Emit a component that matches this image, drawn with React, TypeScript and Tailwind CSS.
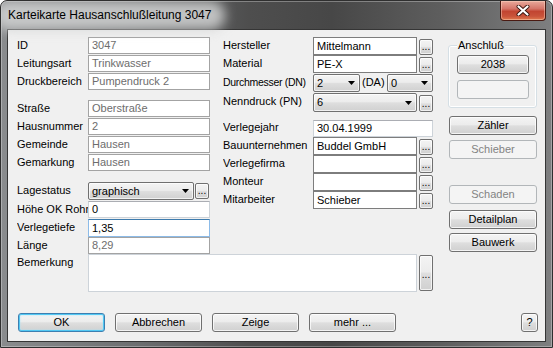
import React from "react";
import clsx from "clsx";

const BTN_BG =
  "bg-[linear-gradient(to_bottom,#f4f4f4_0%,#ececec_46%,#dedede_52%,#d0d0d0_100%)]";

type Tone = "ro" | "ed" | "light" | "focus";

const TONES: Record<Tone, string> = {
  ro: "border-[#a3a3a3] text-[#6d6d6d]",
  ed: "border-[#7d7d7d] text-black",
  light: "border-[#cdd3d9] border-t-[#abadb3] text-black",
  focus: "border-[#8cbbe8] border-t-[#3d7bad] text-black",
};

function Field({ value = "", tone = "ed", className }: { value?: string; tone?: Tone; className?: string }) {
  return (
    <div
      className={clsx(
        "flex items-center overflow-hidden whitespace-nowrap border bg-white px-[3px] leading-none",
        TONES[tone],
        className,
      )}
    >
      {value}
    </div>
  );
}

function Arrow() {
  return (
    <svg width="7" height="4" viewBox="0 0 7 4" className="shrink-0">
      <path d="M0 0h7L3.5 4z" fill="#000" />
    </svg>
  );
}

function Combo({ value, className }: { value: string; className?: string }) {
  return (
    <div
      className={clsx(
        "flex h-[18px] items-center justify-between rounded-[2px] border border-[#707070] pl-[3px] pr-[4px] leading-none shadow-[inset_0_0_0_1px_rgba(255,255,255,0.7)]",
        BTN_BG,
        className,
      )}
    >
      <span>{value}</span>
      <Arrow />
    </div>
  );
}

function Dots({ className }: { className?: string }) {
  return (
    <div
      className={clsx(
        "flex w-[14px] items-end justify-center rounded-[2px] border border-[#707070] pb-[2px] text-[10px] leading-none shadow-[inset_0_0_0_1px_rgba(255,255,255,0.7)]",
        BTN_BG,
        className,
      )}
    >
      ...
    </div>
  );
}

function Button({
  label,
  disabled,
  primary,
  className,
}: {
  label: string;
  disabled?: boolean;
  primary?: boolean;
  className?: string;
}) {
  return (
    <div
      className={clsx(
        "flex h-[19px] items-center justify-center rounded-[3px] border leading-none",
        disabled
          ? "border-[#b2b6b9] bg-[#f4f4f4] text-[#838383]"
          : primary
            ? clsx("border-[#3c7fb1] text-black shadow-[inset_0_0_0_1px_#52c8f3,inset_0_0_2px_1px_#a8e4fb]", BTN_BG)
            : clsx("border-[#707070] text-black shadow-[inset_0_0_0_1px_rgba(255,255,255,0.75)]", BTN_BG),
        className,
      )}
    >
      {label}
    </div>
  );
}

function Row({
  label,
  lw,
  h = "h-[18px]",
  labelClass,
  children,
}: {
  label: string;
  lw: string;
  h?: string;
  labelClass?: string;
  children?: React.ReactNode;
}) {
  return (
    <div className={clsx("flex items-start", h)}>
      <div className={clsx("flex h-[17px] shrink-0 items-center overflow-hidden whitespace-nowrap leading-none", lw, labelClass)}>
        {label}
      </div>
      {children}
    </div>
  );
}

function CloseButton() {
  return (
    <div className="flex h-[20px] w-[46px] items-center justify-center rounded-b-[4px] border border-t-0 border-[#4a1a12] bg-[linear-gradient(to_bottom,#e9a99b_0%,#d5766a_40%,#c24531_55%,#c9533a_80%,#e07a4e_100%)] shadow-[inset_0_0_0_1px_rgba(255,220,200,0.45)]">
      <svg width="14" height="11" viewBox="0 0 14 11">
        <path d="M2.5 1.5 11.5 9.5M11.5 1.5 2.5 9.5" stroke="#3b1710" strokeWidth="4" strokeLinecap="round" />
        <path d="M2.5 1.5 11.5 9.5M11.5 1.5 2.5 9.5" stroke="#fff" strokeWidth="2.2" strokeLinecap="round" />
      </svg>
    </div>
  );
}

export default function App() {
  return (
    <div className="h-[348px] w-[553px] bg-white font-['Liberation_Sans',Arial,sans-serif] text-[11px] text-black">
      <div className="flex h-[348px] w-[553px] flex-col overflow-hidden rounded-t-[7px] border border-[#2f2f2f] bg-[linear-gradient(to_right,#8a8c8e_0%,#6c6e70_25%,#4e4e4e_45%,#474747_60%,#5e5e5e_80%,#7e7f80_100%)] shadow-[inset_0_0_0_1px_rgba(255,255,255,0.3)]">
        {/* Title bar */}
        <div className="flex h-[28px] shrink-0 items-start justify-between">
          <div className="relative ml-[7px] mt-[6px]">
            <div className="absolute -inset-x-[14px] -inset-y-[6px] rounded-[14px] bg-[#d2d3d4]/85 blur-[6px]" />
            <span className="relative text-[12px] leading-[16px] text-black">Karteikarte Hausanschlußleitung 3047</span>
          </div>
          <div className="mr-[6px]">
            <CloseButton />
          </div>
        </div>

        {/* Client area */}
        <div className="ml-[6px] flex h-[313px] w-[539px] flex-col border border-[#353535] bg-[#f0f0f0]">
          <div className="flex pt-[7px]">
            {/* Left area */}
            <div className="flex flex-col pl-[9px]">
              <div className="flex items-start">
                {/* Column 1 */}
                <div className="flex w-[193px] flex-col">
                  <Row label="ID" lw="w-[71px]">
                    <Field tone="ro" value="3047" className="h-[17px] w-[122px]" />
                  </Row>
                  <Row label="Leitungsart" lw="w-[71px]">
                    <Field tone="ro" value="Trinkwasser" className="h-[17px] w-[122px]" />
                  </Row>
                  <Row label="Druckbereich" lw="w-[71px]">
                    <Field tone="ro" value="Pumpendruck 2" className="h-[17px] w-[122px]" />
                  </Row>
                  <div className="h-[9px]" />
                  <Row label="Straße" lw="w-[71px]">
                    <Field tone="ro" value="Oberstraße" className="h-[17px] w-[122px]" />
                  </Row>
                  <Row label="Hausnummer" lw="w-[71px]">
                    <Field tone="ro" value="2" className="h-[17px] w-[122px]" />
                  </Row>
                  <Row label="Gemeinde" lw="w-[71px]">
                    <Field tone="ro" value="Hausen" className="h-[17px] w-[122px]" />
                  </Row>
                  <Row label="Gemarkung" lw="w-[71px]">
                    <Field tone="ro" value="Hausen" className="h-[17px] w-[122px]" />
                  </Row>
                  <div className="h-[10px]" />
                  <Row label="Lagestatus" lw="w-[71px]" h="h-[19px]">
                    <Combo value="graphisch" className="w-[106px]" />
                    <Dots className="ml-[1px] mt-[1px] h-[16px]" />
                  </Row>
                  <Row label="Höhe OK Rohr" lw="w-[71px]">
                    <Field tone="light" value="0" className="h-[17px] w-[122px]" />
                  </Row>
                  <Row label="Verlegetiefe" lw="w-[71px]">
                    <Field tone="focus" value="1,35" className="h-[18px] w-[122px]" />
                  </Row>
                  <Row label="Länge" lw="w-[71px]" h="h-[17px]">
                    <Field tone="ro" value="8,29" className="h-[17px] w-[122px]" />
                  </Row>
                </div>

                {/* Column 2 */}
                <div className="ml-[13px] flex w-[210px] flex-col">
                  <Row label="Hersteller" lw="w-[90px]">
                    <Field value="Mittelmann" className="h-[18px] w-[104px]" />
                    <Dots className="ml-[2px] mt-[2px] h-[16px]" />
                  </Row>
                  <Row label="Material" lw="w-[90px]">
                    <Field value="PE-X" className="h-[18px] w-[104px]" />
                    <Dots className="ml-[2px] mt-[2px] h-[16px]" />
                  </Row>
                  <div className="h-[1px]" />
                  <Row label="Durchmesser (DN)" lw="w-[90px]" h="h-[19px]" labelClass="text-[10.5px] tracking-[-0.3px]">
                    <Combo value="2" className="w-[47px]" />
                    <div className="ml-[2px] flex h-[17px] w-[24px] items-center leading-none">(DA)</div>
                    <Combo value="0" className="ml-[1px] w-[46px]" />
                  </Row>
                  <Row label="Nenndruck (PN)" lw="w-[90px]" h="h-[19px]">
                    <Combo value="6" className="h-[19px] w-[104px]" />
                    <Dots className="ml-[2px] mt-[2px] h-[17px]" />
                  </Row>
                  <div className="h-[7px]" />
                  <Row label="Verlegejahr" lw="w-[90px]">
                    <Field tone="light" value="30.04.1999" className="mt-[1px] h-[17px] w-[122px]" />
                  </Row>
                  <Row label="Bauunternehmen" lw="w-[90px]">
                    <Field value="Buddel GmbH" className="h-[18px] w-[104px]" />
                    <Dots className="ml-[2px] mt-[2px] h-[16px]" />
                  </Row>
                  <Row label="Verlegefirma" lw="w-[90px]">
                    <Field className="h-[18px] w-[104px]" />
                    <Dots className="ml-[2px] mt-[2px] h-[16px]" />
                  </Row>
                  <Row label="Monteur" lw="w-[90px]">
                    <Field className="h-[18px] w-[104px]" />
                    <Dots className="ml-[2px] mt-[2px] h-[16px]" />
                  </Row>
                  <Row label="Mitarbeiter" lw="w-[90px]">
                    <Field value="Schieber" className="h-[18px] w-[104px]" />
                    <Dots className="ml-[2px] mt-[2px] h-[16px]" />
                  </Row>
                </div>
              </div>

              {/* Bemerkung */}
              <Row label="Bemerkung" lw="w-[71px]" h="h-[38px]">
                <Field tone="light" className="h-[38px] w-[329px] border-t-[#cdd3d9]" />
                <Dots className="ml-[2px] mt-[1px] h-[36px] !items-center pt-[6px]" />
              </Row>
            </div>

            {/* Right column */}
            <div className="ml-[15px] flex w-[89px] flex-col">
              <div className="relative mt-[8px] flex h-[63px] flex-col rounded-[3px] border border-[#d5dfe5] pl-[8px] pt-[9px] shadow-[inset_0_0_0_1px_#fff]">
                <span className="absolute left-[8px] top-[-8px] bg-[#f0f0f0] px-[1px] leading-[14px]">Anschluß</span>
                <Button label="2038" className="w-[72px]" />
                <Button label="" disabled className="mt-[6px] w-[72px]" />
              </div>
              <Button label="Zähler" className="ml-[1px] mt-[8px] w-[88px]" />
              <Button label="Schieber" disabled className="ml-[1px] mt-[5px] w-[88px]" />
              <Button label="Schaden" disabled className="ml-[1px] mt-[26px] w-[88px]" />
              <Button label="Detailplan" className="ml-[1px] mt-[6px] w-[88px]" />
              <Button label="Bauwerk" className="ml-[1px] mt-[4px] w-[88px]" />
            </div>
          </div>

          {/* Bottom buttons */}
          <div className="mt-[21px] flex items-center gap-[10px] pl-[10px] pr-[7px]">
            <Button label="OK" primary className="w-[87px]" />
            <Button label="Abbrechen" className="w-[87px]" />
            <Button label="Zeige" className="w-[87px]" />
            <Button label="mehr ..." className="w-[87px]" />
            <Button label="?" className="ml-auto w-[17px]" />
          </div>
        </div>
      </div>
    </div>
  );
}
